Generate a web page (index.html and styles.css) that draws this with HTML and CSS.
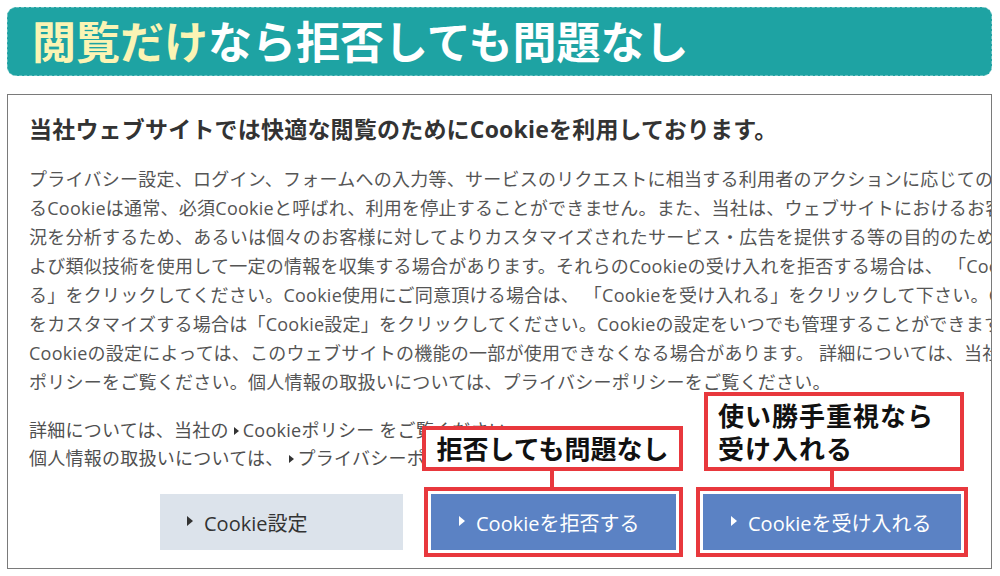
FILE: index.html
```html
<!DOCTYPE html>
<html lang="ja">
<head>
<meta charset="utf-8">
<title>Cookie</title>
<link rel="stylesheet" href="styles.css">
</head>
<body>
<div class="banner"><span class="hl">閲覧だけ</span>なら拒否しても問題なし</div>
<div class="dialog">
  <h1 class="title">当社ウェブサイトでは快適な閲覧のためにCookieを利用しております。</h1>
  <div class="body">
    <p class="line">プライバシー設定、ログイン、フォームへの入力等、サービスのリクエストに相当する利用者のアクションに応じてのみ設定され</p>
    <p class="line">るCookieは通常、必須Cookieと呼ばれ、利用を停止することができません。また、当社は、ウェブサイトにおけるお客様の利用状</p>
    <p class="line">況を分析するため、あるいは個々のお客様に対してよりカスタマイズされたサービス・広告を提供する等の目的のためにCookieお</p>
    <p class="line">よび類似技術を使用して一定の情報を収集する場合があります。それらのCookieの受け入れを拒否する場合は、 「Cookieを拒否す</p>
    <p class="line">る」をクリックしてください。Cookie使用にご同意頂ける場合は、 「Cookieを受け入れる」をクリックして下さい。Cookieの設定</p>
    <p class="line">をカスタマイズする場合は「Cookie設定」をクリックしてください。Cookieの設定をいつでも管理することができます。</p>
    <p class="line">Cookieの設定によっては、このウェブサイトの機能の一部が使用できなくなる場合があります。 詳細については、当社のCookie</p>
    <p class="line">ポリシーをご覧ください。個人情報の取扱いについては、プライバシーポリシーをご覧ください。</p>
  </div>
  <div class="links">
    <p class="line">詳細については、当社の <span class="tri"></span>Cookieポリシー をご覧ください。</p>
    <p class="line">個人情報の取扱いについては、 <span class="tri"></span>プライバシーポリシー をご覧ください。</p>
  </div>
  <div class="buttons">
    <div class="btn btn-gray"><span class="tri"></span>Cookie設定</div>
    <div class="btn btn-blue btn-reject"><span class="tri"></span>Cookieを拒否する</div>
    <div class="btn btn-blue btn-accept"><span class="tri"></span>Cookieを受け入れる</div>
  </div>
  <div class="callout callout-reject">拒否しても問題なし</div>
  <div class="callout callout-accept">使い勝手重視なら<br>受け入れる</div>
  <div class="connector connector-reject"></div>
  <div class="connector connector-accept"></div>
</div>
</body>
</html>
```

FILE: styles.css
```css
* { box-sizing: border-box; }
html, body {
  margin: 0;
  padding: 0;
  width: 1000px;
  height: 576px;
  overflow: hidden;
  background: #ffffff;
  font-family: "Open Sans", "Noto Sans CJK JP", sans-serif;
  text-spacing-trim: space-all;
}
.banner {
  margin: 7px 8px 0 7px;
  height: 69px;
  background: #1ea3a3;
  border: 1.5px dashed #6cc2c2;
  border-radius: 9px;
  color: #ffffff;
  font-family: "Noto Sans CJK JP", sans-serif;
  font-size: 44px;
  font-weight: 700;
  line-height: 64px;
  padding-left: 24px;
}
.banner .hl { color: #fbf4b4; }
.dialog {
  position: relative;
  margin: 18px 8px 0 7px;
  height: 475px;
  border: 1.5px solid #7a7a7a;
  overflow: hidden;
  padding: 19px 0 0 21px;
}
.title {
  margin: 0;
  font-size: 23px;
  font-weight: 700;
  line-height: 30px;
  color: #333333;
  white-space: nowrap;
  letter-spacing: 0.2px;
}
.body {
  margin-top: 21px;
}
.line {
  margin: 0;
  white-space: nowrap;
  font-size: 18px;
  letter-spacing: 0.25px;
  line-height: 29px;
  color: #555555;
}
.links {
  margin-top: 19px;
}
.links .line {
  line-height: 28px;
  color: #505050;
}
.tri {
  display: inline-block;
  width: 0;
  height: 0;
  border-left: 6px solid currentColor;
  border-top: 5px solid transparent;
  border-bottom: 5px solid transparent;
  margin-right: 11px;
  vertical-align: middle;
  position: relative;
  top: -1px;
}
.links .tri { color: #333; margin-right: 4px; border-left-width: 5px; border-top-width: 4.5px; border-bottom-width: 4.5px; }
.buttons {
  display: flex;
  margin-top: 22px;
  padding-left: 131px;
  gap: 28px;
}
.btn {
  height: 56px;
  display: flex;
  align-items: center;
  justify-content: flex-start;
  padding-left: 28px;
  font-size: 20px;
  white-space: nowrap;
}
.btn-gray {
  width: 243px;
  background: #dce3eb;
  color: #333333;
  padding-left: 27px;
}
.btn-blue {
  background: #5b82c4;
  color: #ffffff;
  outline: 4px solid #e8383d;
  outline-offset: 3px;
}
.btn-reject { width: 245px; }
.btn-accept { width: 258px; margin-left: -1px; }
.callout {
  position: absolute;
  background: #ffffff;
  border: 4px solid #e8383d;
  color: #111111;
  font-family: "Noto Sans CJK JP", sans-serif;
  font-size: 26px;
  font-weight: 700;
  white-space: nowrap;
}
.callout-reject {
  left: 414px;
  top: 331px;
  width: 261px;
  height: 45px;
  line-height: 36px;
  text-align: center;
}
.callout-accept {
  left: 696px;
  top: 297px;
  width: 260px;
  height: 79px;
  line-height: 33px;
  padding: 2px 0 0 10px;
  letter-spacing: 1px;
}
.connector {
  position: absolute;
  top: 375px;
  width: 4px;
  height: 18px;
  background: #e8383d;
}
.connector-reject { left: 542px; }
.connector-accept { left: 822px; }
```
